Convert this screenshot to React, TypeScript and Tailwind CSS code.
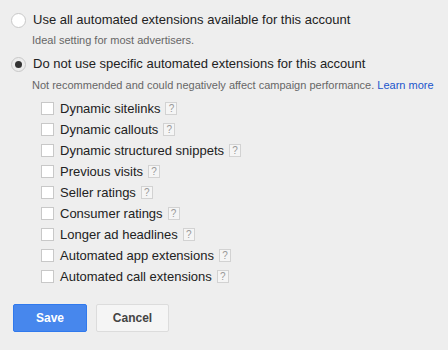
const EXTENSIONS = [
  'Dynamic sitelinks',
  'Dynamic callouts',
  'Dynamic structured snippets',
  'Previous visits',
  'Seller ratings',
  'Consumer ratings',
  'Longer ad headlines',
  'Automated app extensions',
  'Automated call extensions',
];

function Radio({ checked }: { checked?: boolean }) {
  return (
    <span
      className={`w-[15px] h-[15px] rounded-full border border-[#c8c8c8] flex items-center justify-center shrink-0 ${
        checked ? 'bg-[#ececec]' : 'bg-white'
      }`}
    >
      {checked && <span className="w-[7px] h-[7px] rounded-full bg-[#333]" />}
    </span>
  );
}

function Help() {
  return (
    <span className="inline-flex items-center justify-center w-[12px] h-[13px] border border-[#d2d2d2] bg-[#f5f5f5] text-[10px] leading-none text-[#999] ml-[5px]">
      ?
    </span>
  );
}

export default function App() {
  return (
    <div
      className="w-[448px] h-[350px] bg-[#eeeeee] text-[#222] pt-[10px] pl-[11px]"
      style={{ fontFamily: '"Liberation Sans", Arial, sans-serif' }}
    >
      {/* Option 1 */}
      <div className="flex items-center gap-[7px] h-[20px]">
        <Radio />
        <span className="text-[13px]">Use all automated extensions available for this account</span>
      </div>
      <div className="pl-[21px] text-[11px] text-[#666] h-[20px] leading-[20px]">
        Ideal setting for most advertisers.
      </div>

      {/* Option 2 */}
      <div className="flex items-center gap-[7px] h-[20px] mt-[4px]">
        <Radio checked />
        <span className="text-[13px]">Do not use specific automated extensions for this account</span>
      </div>
      <div className="pl-[21px] text-[11px] text-[#666] h-[20px] leading-[20px] mt-[1px]">
        Not recommended and could negatively affect campaign performance.{' '}
        <span className="text-[#1a55cc]">Learn more</span>
      </div>

      <div className="pl-[30px] mt-[3px] flex flex-col">
        {EXTENSIONS.map((label) => (
          <div key={label} className="flex items-center h-[21px]">
            <span className="w-[13px] h-[13px] bg-white border border-[#c8c8c8] shrink-0" />
            <span className="text-[13px] ml-[6px]">{label}</span>
            <Help />
          </div>
        ))}
      </div>

      <div className="flex gap-[9px] mt-[17px] ml-[2px]">
        <button className="w-[74px] h-[28px] rounded-[2px] bg-[#4787ed] border border-[#3079ed] text-white text-[12px] font-bold">
          Save
        </button>
        <button className="w-[73px] h-[28px] rounded-[2px] bg-[#f5f5f5] border border-[#dcdcdc] text-[#444] text-[12px] font-bold">
          Cancel
        </button>
      </div>
    </div>
  );
}
